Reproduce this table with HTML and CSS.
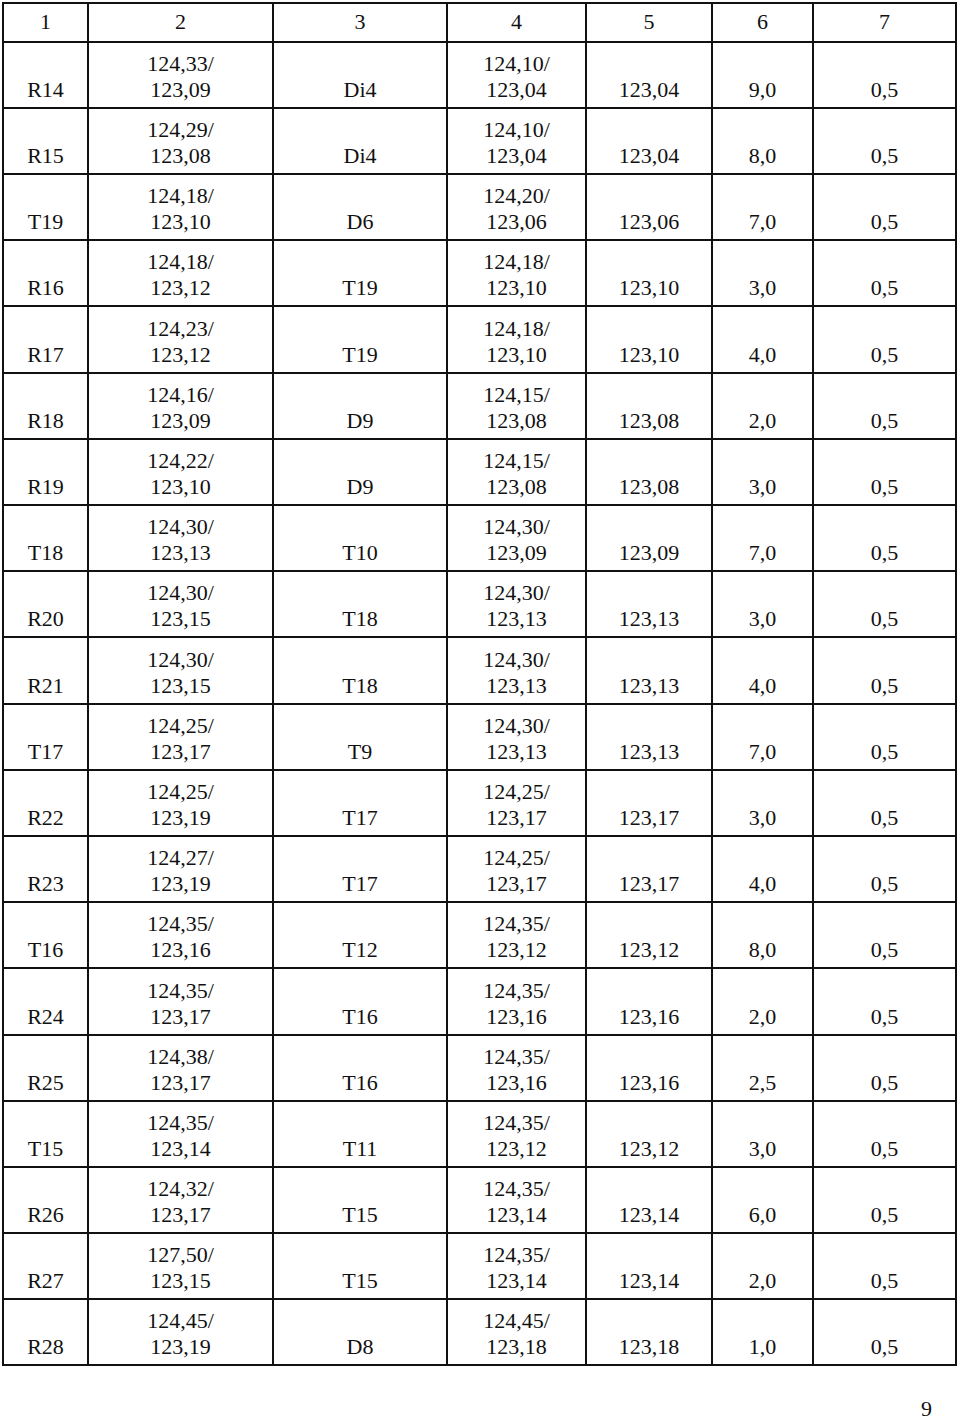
FILE: index.html
```html
<!DOCTYPE html>
<html>
<head>
<meta charset="utf-8">
<link rel="stylesheet" href="styles.css">
</head>
<body>
<div class="page">
<table class="grid">
<colgroup>
<col class="c1"><col class="c2"><col class="c3"><col class="c4"><col class="c5"><col class="c6"><col class="c7">
</colgroup>
<tr class="head"><td>1</td><td>2</td><td>3</td><td>4</td><td>5</td><td>6</td><td>7</td></tr>
<tr><td>R14</td><td>124,33/<br>123,09</td><td>Di4</td><td>124,10/<br>123,04</td><td>123,04</td><td>9,0</td><td>0,5</td></tr>
<tr><td>R15</td><td>124,29/<br>123,08</td><td>Di4</td><td>124,10/<br>123,04</td><td>123,04</td><td>8,0</td><td>0,5</td></tr>
<tr><td>T19</td><td>124,18/<br>123,10</td><td>D6</td><td>124,20/<br>123,06</td><td>123,06</td><td>7,0</td><td>0,5</td></tr>
<tr><td>R16</td><td>124,18/<br>123,12</td><td>T19</td><td>124,18/<br>123,10</td><td>123,10</td><td>3,0</td><td>0,5</td></tr>
<tr><td>R17</td><td>124,23/<br>123,12</td><td>T19</td><td>124,18/<br>123,10</td><td>123,10</td><td>4,0</td><td>0,5</td></tr>
<tr><td>R18</td><td>124,16/<br>123,09</td><td>D9</td><td>124,15/<br>123,08</td><td>123,08</td><td>2,0</td><td>0,5</td></tr>
<tr><td>R19</td><td>124,22/<br>123,10</td><td>D9</td><td>124,15/<br>123,08</td><td>123,08</td><td>3,0</td><td>0,5</td></tr>
<tr><td>T18</td><td>124,30/<br>123,13</td><td>T10</td><td>124,30/<br>123,09</td><td>123,09</td><td>7,0</td><td>0,5</td></tr>
<tr><td>R20</td><td>124,30/<br>123,15</td><td>T18</td><td>124,30/<br>123,13</td><td>123,13</td><td>3,0</td><td>0,5</td></tr>
<tr><td>R21</td><td>124,30/<br>123,15</td><td>T18</td><td>124,30/<br>123,13</td><td>123,13</td><td>4,0</td><td>0,5</td></tr>
<tr><td>T17</td><td>124,25/<br>123,17</td><td>T9</td><td>124,30/<br>123,13</td><td>123,13</td><td>7,0</td><td>0,5</td></tr>
<tr><td>R22</td><td>124,25/<br>123,19</td><td>T17</td><td>124,25/<br>123,17</td><td>123,17</td><td>3,0</td><td>0,5</td></tr>
<tr><td>R23</td><td>124,27/<br>123,19</td><td>T17</td><td>124,25/<br>123,17</td><td>123,17</td><td>4,0</td><td>0,5</td></tr>
<tr><td>T16</td><td>124,35/<br>123,16</td><td>T12</td><td>124,35/<br>123,12</td><td>123,12</td><td>8,0</td><td>0,5</td></tr>
<tr><td>R24</td><td>124,35/<br>123,17</td><td>T16</td><td>124,35/<br>123,16</td><td>123,16</td><td>2,0</td><td>0,5</td></tr>
<tr><td>R25</td><td>124,38/<br>123,17</td><td>T16</td><td>124,35/<br>123,16</td><td>123,16</td><td>2,5</td><td>0,5</td></tr>
<tr><td>T15</td><td>124,35/<br>123,14</td><td>T11</td><td>124,35/<br>123,12</td><td>123,12</td><td>3,0</td><td>0,5</td></tr>
<tr><td>R26</td><td>124,32/<br>123,17</td><td>T15</td><td>124,35/<br>123,14</td><td>123,14</td><td>6,0</td><td>0,5</td></tr>
<tr><td>R27</td><td>127,50/<br>123,15</td><td>T15</td><td>124,35/<br>123,14</td><td>123,14</td><td>2,0</td><td>0,5</td></tr>
<tr><td>R28</td><td>124,45/<br>123,19</td><td>D8</td><td>124,45/<br>123,18</td><td>123,18</td><td>1,0</td><td>0,5</td></tr>
</table>
<div class="pagenum">9</div>
</div>
</body>
</html>
```
FILE: styles.css
```css
html, body {
  margin: 0;
  padding: 0;
  background: #fff;
}
body {
  font-family: "Liberation Serif", "Times New Roman", serif;
  color: #111;
}
.page {
  padding: 2px 0 0 2px;
}
.grid {
  border-collapse: collapse;
  table-layout: fixed;
  width: 953px;
  font-size: 22px;
  line-height: 26px;
}
.c1 { width: 85px; }
.c2 { width: 185px; }
.c3 { width: 174px; }
.c4 { width: 139px; }
.c5 { width: 126px; }
.c6 { width: 101px; }
.c7 { width: 143px; }
.grid td {
  border: 2px solid #111;
  text-align: center;
  vertical-align: bottom;
  padding: 0 2px 4px;
  height: 66.2px;
  box-sizing: border-box;
}
.grid .head td {
  vertical-align: middle;
  padding: 0 2px;
  height: 38.7px;
}
.pagenum {
  text-align: right;
  font-size: 22px;
  line-height: 20px;
  padding-right: 28px;
  margin-top: 33px;
}
```
